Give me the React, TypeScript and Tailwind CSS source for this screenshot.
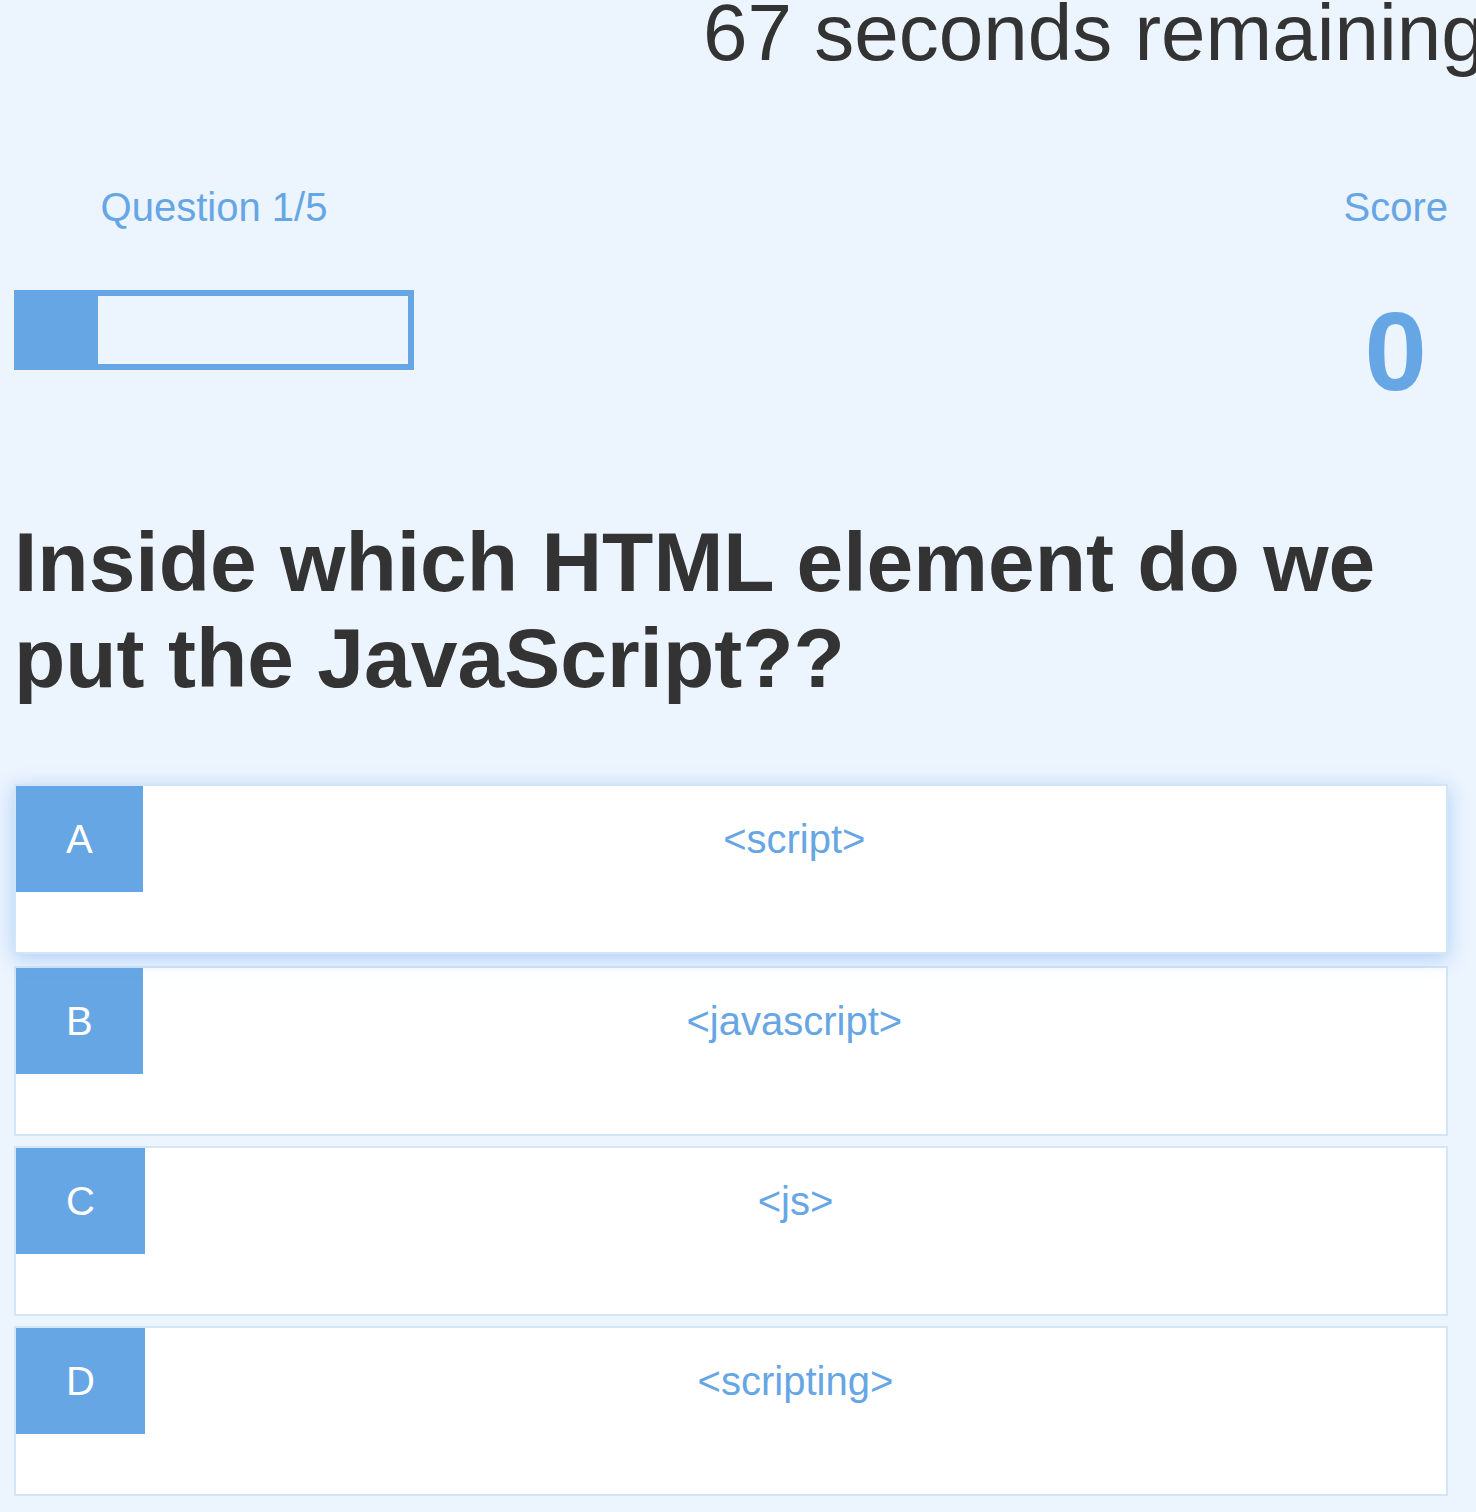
import React from "react";

const options = [
  { letter: "A", text: "<script>", hover: true },
  { letter: "B", text: "<javascript>" },
  { letter: "C", text: "<js>" },
  { letter: "D", text: "<scripting>" },
];

const Option = ({ letter, text, hover }: { letter: string; text: string; hover?: boolean }) => (
  <div
    className={`flex h-[170px] mb-[10px] bg-white border-2 border-[#d3e5f7] ${
      hover ? "-translate-y-[2px] shadow-[0_4px_18px_rgba(90,165,235,0.45)]" : ""
    }`}
  >
    <div className="self-start bg-[#67a6e4] text-white text-[40px] leading-[46px] px-[50px] py-[30px]">
      {letter}
    </div>
    <div className="flex-1 text-center text-[#67a6e4] text-[40px] leading-[46px] py-[30px]">
      {text}
    </div>
  </div>
);

export default function App() {
  return (
    <div
      className="min-h-[1512px] w-full overflow-hidden bg-[#ecf4fe] text-[#333333] pl-[14px] pr-[28px]"
      style={{ fontFamily: '"Liberation Sans", Arial, sans-serif' }}
    >
      <div className="-mt-[13px] ml-[689px] whitespace-nowrap text-[80px] leading-[92px]">
        67 seconds remaining
      </div>

      <div className="flex justify-between items-start mt-[105px]">
        <div className="flex flex-col items-center w-[400px]">
          <p className="text-[40px] leading-[46px] text-[#67a6e4]">Question 1/5</p>
          <div className="mt-[60px] w-[400px] h-[80px] border-[6px] border-[#67a6e4]">
            <div className="h-full w-[20%] bg-[#67a6e4]" />
          </div>
        </div>
        <div className="flex flex-col items-center">
          <p className="text-[40px] leading-[46px] text-[#67a6e4]">Score</p>
          <p className="mt-[58px] text-[112px] leading-[128px] font-bold text-[#67a6e4]">0</p>
        </div>
      </div>

      <h2 className="mt-[98px] text-[84px] leading-[96px] font-bold">
        Inside which HTML element do we put the JavaScript??
      </h2>

      <div className="mt-[80px]">
        {options.map((o) => (
          <Option key={o.letter} {...o} />
        ))}
      </div>
    </div>
  );
}
